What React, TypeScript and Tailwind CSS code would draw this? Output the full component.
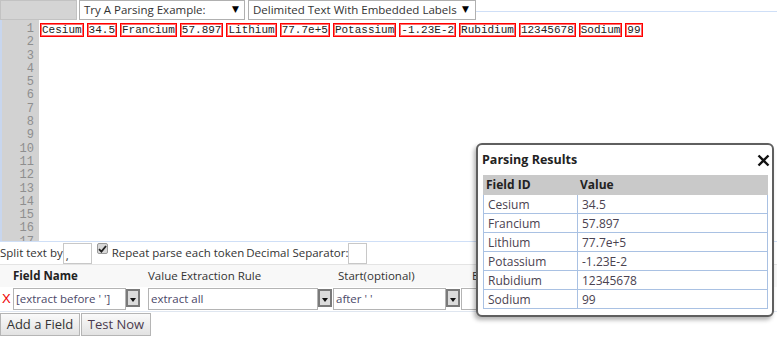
import React from "react";

const tokens = ["Cesium", "34.5", "Francium", "57.897", "Lithium", "77.7e+5", "Potassium", "-1.23E-2", "Rubidium", "12345678", "Sodium", "99"];

const results = [
  ["Cesium", "34.5"],
  ["Francium", "57.897"],
  ["Lithium", "77.7e+5"],
  ["Potassium", "-1.23E-2"],
  ["Rubidium", "12345678"],
  ["Sodium", "99"],
];

function DropButton() {
  return (
    <div className="w-[14px] h-[18px] mt-[1px] bg-[#dcdcdc] border-2 border-[#7a7a7a] flex items-end justify-center pb-[3px]">
      <svg width="6" height="4" viewBox="0 0 6 4">
        <path d="M0 0 H6 L3 4 Z" fill="#111" />
      </svg>
    </div>
  );
}

function ComboField({ value, width }: { value: string; width: string }) {
  return (
    <div className="flex items-start">
      <div className={`${width} h-[22px] border border-[#b4b4b4] bg-white px-[2px] flex items-center text-[#4b4868] text-[11.5px] whitespace-nowrap`}>
        {value}
      </div>
      <DropButton />
    </div>
  );
}

export default function App() {
  return (
    <div className="relative w-[777px] h-[337px] bg-white overflow-hidden text-[#333] font-['Open_Sans',sans-serif]">
      {/* top toolbar */}
      <div className="flex h-5">
        <div className="w-[77px] bg-[#d4d4d4] border border-[#c2c2c2]" />
        <div className="ml-[2px] w-[166px] border border-[#b0b0b0] flex items-center justify-between pl-[4px] pr-[5px] text-[11.5px] text-[#333] whitespace-nowrap">
          <span>Try A Parsing Example:</span>
          <span className="text-[9px] font-['DejaVu_Sans',sans-serif] text-black">▼</span>
        </div>
        <div className="ml-[3px] w-[228px] border border-[#b0b0b0] flex items-center justify-between pl-[4px] pr-[6px] text-[11.5px] text-[#333] whitespace-nowrap">
          <span>Delimited Text With Embedded Labels</span>
          <span className="text-[9px] font-['DejaVu_Sans',sans-serif] text-black">▼</span>
        </div>
        <div className="flex-1 h-[12px] border-b border-[#cfdff7]" />
      </div>

      {/* editor */}
      <div className="flex h-[222px] overflow-hidden border-b border-[#cfdff7]">
        <div className="w-[39px] shrink-0 bg-[#d2d2d2] border-l-2 border-[#c8d6ee] pt-[3px] pr-[5px] text-right font-['Liberation_Mono',monospace] text-[12px] leading-[13.3px] text-[#8e8e8e]">
          {Array.from({ length: 17 }, (_, i) => (
            <div key={i}>{i + 1}</div>
          ))}
        </div>
        <div className="pl-[1px] pt-[3px]">
          <div className="flex font-['Liberation_Mono',monospace] text-[11px] text-[#222]">
            {tokens.map((t) => (
              <span key={t} className="mr-[3px] h-[14px] leading-[12px] border border-[#ff0000] shadow-[inset_0_0_0_1px_#ff6b6b] px-[1px] whitespace-pre">
                {t}
              </span>
            ))}
          </div>
        </div>
      </div>

      {/* options */}
      <div className="flex items-center h-[22px] text-[11.5px] text-[#333] whitespace-nowrap">
        <span>Split text by</span>
        <div className="w-[29px] h-[21px] mt-[1px] border border-[#c8c8c8] flex items-end pl-[2px] pb-[2px] leading-none">,</div>
        <div className="ml-[5px] self-start mt-[1px] w-[11px] h-[11px] bg-[#d8d8d8] border border-[#9a9a9a] rounded-[2px] flex items-center justify-center">
          <svg width="9" height="8" viewBox="0 0 9 8">
            <path d="M1 4.2 L3.4 6.6 L8 1" stroke="#222" strokeWidth="1.8" fill="none" />
          </svg>
        </div>
        <span className="ml-[4px]">Repeat parse each token</span>
        <span className="ml-[2px]">Decimal Separator:</span>
        <div className="w-[19px] h-[21px] mt-[1px] border border-[#c8c8c8]" />
      </div>

      {/* field table */}
      <div className="border-t border-[#e4e4e4] bg-[#f8f8f8] h-[23px] flex items-center text-[11.5px] whitespace-nowrap">
        <span className="ml-[13px] w-[135px] font-bold text-[#222]">Field Name</span>
        <span className="w-[190px] text-[#333]">Value Extraction Rule</span>
        <span className="w-[134px] text-[#333]">Start(optional)</span>
        <span className="text-[#333]">E</span>
      </div>
      <div className="h-[25px] flex items-start pt-[1px] border-b border-[#dfe6f0]">
        <span className="w-[13px] pl-[2px] text-[#e00] text-[13px] leading-[22px] font-['Liberation_Sans',sans-serif]">X</span>
        <ComboField value="[extract before ' ']" width="w-[113px]" />
        <div className="w-[8px]" />
        <ComboField value="extract all" width="w-[170px]" />
        <div className="w-[1px]" />
        <ComboField value="after ' '" width="w-[113px]" />
        <div className="w-[1px]" />
        <div className="w-[60px] h-[22px] border border-[#b4b4b4]" />
      </div>

      {/* buttons */}
      <div className="flex gap-[1px] mt-[1px]">
        <button className="w-[80px] h-[23px] border border-[#b5b5b5] bg-gradient-to-b from-[#fafafa] to-[#e2e2e2] text-[13px] leading-none text-[#333] whitespace-nowrap">
          Add a Field
        </button>
        <button className="w-[70px] h-[23px] border border-[#b5b5b5] bg-gradient-to-b from-[#fafafa] to-[#e2e2e2] text-[13px] leading-none text-[#4b3a4e] whitespace-nowrap">
          Test Now
        </button>
      </div>

      {/* results popup */}
      <div className="absolute left-[476px] top-[143px] w-[298px] h-[174px] bg-white border-2 border-[#5f5f5f] rounded-[6px] shadow-[-2px_3px_4px_rgba(0,0,0,0.3)]">
        <div className="flex items-center justify-between h-[30px] pl-[4px] pr-[2px]">
          <span className="font-bold text-[12.5px] text-[#222]">Parsing Results</span>
          <svg width="13" height="13" viewBox="0 0 13 13">
            <path d="M1.5 1.5 L11.5 11.5 M11.5 1.5 L1.5 11.5" stroke="#111" strokeWidth="2.4" />
          </svg>
        </div>
        <table className="ml-[5px] w-[285px] border-collapse text-[12px]">
          <thead>
            <tr className="bg-[#c9c9c9] h-[19px]">
              <th className="w-[94px] text-left font-bold pl-[2px] text-[#222] border border-[#c9c9c9]">Field ID</th>
              <th className="text-left font-bold pl-[2px] text-[#222] border border-[#c9c9c9]">Value</th>
            </tr>
          </thead>
          <tbody>
            {results.map(([k, v]) => (
              <tr key={k} className="h-[19px]">
                <td className="border border-[#a9c1e3] pl-[4px] text-[#4a4250] leading-[17px]">{k}</td>
                <td className="border border-[#a9c1e3] pl-[4px] text-[#4a4250] leading-[17px]">{v}</td>
              </tr>
            ))}
          </tbody>
        </table>
      </div>
    </div>
  );
}
